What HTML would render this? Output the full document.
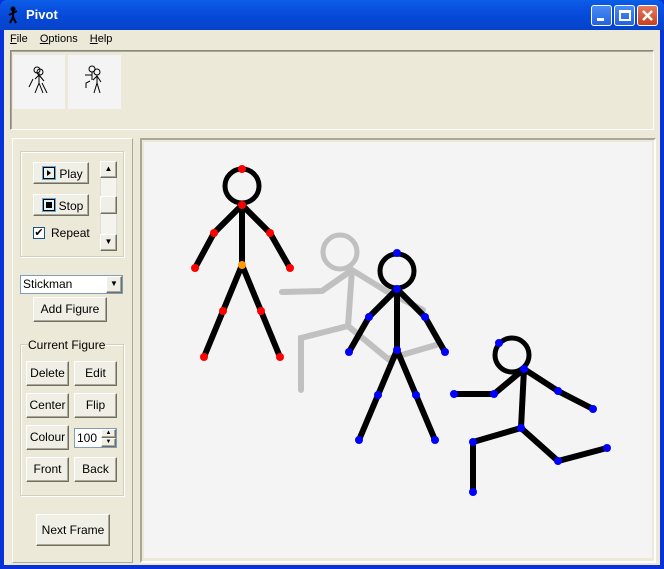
<!DOCTYPE html>
<html><head><style>
*{margin:0;padding:0;box-sizing:border-box}
body{width:664px;height:569px;overflow:hidden;background:#0831d9;font-family:Tahoma,"Liberation Sans",sans-serif;font-size:11px;color:#000;position:relative}
.title{position:absolute;left:0;top:0;width:664px;height:30px;background:linear-gradient(#0a5fe8,#0a54e2 20%,#0648d6 60%,#0544c8);border-radius:7px 7px 0 0}
.title span{position:absolute;left:26px;top:7px;color:#fff;font-weight:bold;font-size:13px;font-family:"Liberation Sans",sans-serif}
.btn{position:absolute;top:5px;width:21px;height:21px;border:1px solid #fff;border-radius:3px;background:linear-gradient(#4a8cf5,#2462df)}
.client{position:absolute;left:4px;top:30px;width:656px;height:535px;background:#ece9d8}
.menu{position:absolute;left:10px;top:33px;font-size:11px}
.menu span{margin-right:9px}
.b{position:absolute;background:#f0efe6;border:1px solid;border-color:#fff #716f64 #716f64 #fff;box-shadow:inset -1px -1px 0 #aca899;text-align:center;font-size:12px;line-height:22px}
.grp{position:absolute;border:1px solid #d0d0bf;box-shadow:1px 1px 0 #fff inset,1px 1px 0 #fff}
</style></head><body>
<div class="title">
<svg style="position:absolute;left:7px;top:6px" width="12" height="18"><circle cx="6" cy="3" r="2.5" fill="#000"/><path d="M6 5V11M6 7L2 9M6 7L10 5M6 11L3 17M6 11L9 17" stroke="#000" stroke-width="2" fill="none"/></svg>
<span>Pivot</span>
<div class="btn" style="left:591px"><div style="position:absolute;left:5px;top:12px;width:7px;height:3px;background:#fff"></div></div>
<div class="btn" style="left:614px"><div style="position:absolute;left:4px;top:4px;width:12px;height:11px;border:2px solid #fff;border-top-width:3px"></div></div>
<div class="btn" style="left:637px;background:linear-gradient(#e6795c,#c8401f)"><svg width="19" height="19"><path d="M5 5L14 14M14 5L5 14" stroke="#fff" stroke-width="2.5"/></svg></div>
</div>
<div class="client"></div>
<div class="menu"><span><u>F</u>ile</span> <span><u>O</u>ptions</span> <span><u>H</u>elp</span></div>
<div style="position:absolute;left:10px;top:50px;width:644px;height:80px;border:1px solid;border-color:#8a887c #fff #fff #8a887c;box-shadow:inset 1px 1px 0 #aca899"></div>
<div style="position:absolute;left:13px;top:55px;width:52px;height:54px;background:#f4f4f4"></div>
<div style="position:absolute;left:68px;top:55px;width:53px;height:54px;background:#f4f4f4"></div>
<svg style="position:absolute;left:13px;top:55px" width="110" height="54" stroke="#000" fill="none" stroke-width="1">
<circle cx="24" cy="15" r="3"/><circle cx="27" cy="17" r="3" /><path d="M26 18V28L22 38M26 28L30 38M26 20L22 24M26 20L31 26M20 24L16 32M29 28L34 38"/>
<g transform="translate(55,0)"><circle cx="24" cy="14" r="3"/><circle cx="29" cy="17" r="3"/><path d="M29 20V28L26 38M29 28L32 38M24 17V25M24 20L17 20M29 21L25 25M29 21L33 27M22 26L18 28V33"/></g>
</svg>
<div style="position:absolute;left:12px;top:138px;width:121px;height:425px;border:1px solid;border-color:#fff #aca899 #aca899 #fff"></div>
<div class="grp" style="left:20px;top:151px;width:104px;height:106px"></div>
<div class="b" style="left:33px;top:162px;width:56px;height:22px"><span style="position:absolute;left:9px;top:4px;width:12px;height:12px;border:1px solid #000;box-shadow:0 0 0 1px #5ad"></span><span style="position:absolute;left:13px;top:7px;border-left:4px solid #000;border-top:3px solid transparent;border-bottom:3px solid transparent"></span><span style="margin-left:20px">Play</span></div>
<div class="b" style="left:33px;top:194px;width:56px;height:22px"><span style="position:absolute;left:9px;top:4px;width:12px;height:12px;border:1px solid #000;box-shadow:0 0 0 1px #5ad"></span><span style="position:absolute;left:12px;top:7px;width:6px;height:6px;background:#000"></span><span style="margin-left:20px">Stop</span></div>
<div style="position:absolute;left:33px;top:227px;width:12px;height:12px;border:1px solid #1c5180;background:#fff;font-size:11px;line-height:10px;text-align:center">✔</div>
<div style="position:absolute;left:51px;top:226px;font-size:12px">Repeat</div>
<div style="position:absolute;left:100px;top:161px;width:17px;height:90px;background:#f4f3ee;border:1px solid #ddd"></div>
<div class="b" style="left:100px;top:161px;width:17px;height:17px;line-height:14px;font-size:8px">▲</div>
<div class="b" style="left:100px;top:196px;width:17px;height:18px"></div>
<div class="b" style="left:100px;top:234px;width:17px;height:17px;line-height:14px;font-size:8px">▼</div>
<div style="position:absolute;left:20px;top:275px;width:103px;height:19px;background:#fff;border:1px solid #7f9db9;font-size:12px;line-height:17px;padding-left:2px">Stickman</div>
<div class="b" style="left:106px;top:276px;width:16px;height:17px;line-height:14px;font-size:8px">▼</div>
<div class="b" style="left:33px;top:297px;width:74px;height:25px;line-height:23px">Add Figure</div>
<div class="grp" style="left:20px;top:344px;width:104px;height:152px"></div>
<div style="position:absolute;left:27px;top:338px;background:#ece9d8;font-size:12px;padding:0 1px">Current Figure</div>
<div class="b" style="left:26px;top:361px;width:43px;height:25px;line-height:23px">Delete</div>
<div class="b" style="left:74px;top:361px;width:43px;height:25px;line-height:23px">Edit</div>
<div class="b" style="left:26px;top:393px;width:43px;height:25px;line-height:23px">Center</div>
<div class="b" style="left:74px;top:393px;width:43px;height:25px;line-height:23px">Flip</div>
<div class="b" style="left:26px;top:425px;width:43px;height:25px;line-height:23px">Colour</div>
<div style="position:absolute;left:74px;top:428px;width:43px;height:20px;background:#fff;border:1px solid #7f9db9;font-size:12px;line-height:18px;padding-left:2px">100</div>
<div class="b" style="left:101px;top:429px;width:15px;height:9px;font-size:6px;line-height:7px">▲</div>
<div class="b" style="left:101px;top:438px;width:15px;height:9px;font-size:6px;line-height:7px">▼</div>
<div class="b" style="left:26px;top:457px;width:43px;height:25px;line-height:23px">Front</div>
<div class="b" style="left:74px;top:457px;width:43px;height:25px;line-height:23px">Back</div>
<div class="b" style="left:36px;top:514px;width:74px;height:32px;line-height:30px">Next Frame</div>
<div style="position:absolute;left:140px;top:138px;width:516px;height:425px;border:2px solid;border-color:#aca899 #fff #fff #aca899;background:#ece9d8"></div>
<div style="position:absolute;left:144px;top:142px;width:508px;height:416px;background:#f4f4f4"></div>
<svg style="position:absolute;left:0;top:0" width="664" height="569" fill="none" stroke-linecap="round" stroke-width="6">
<g stroke="#c0c0c0">
<circle cx="340" cy="252" r="17" stroke-width="5"/>
<path d="M352 270L348 326M352 270L322 291L282 292M352 270L386 291L423 310M348 326L301 338L301 390M348 326L388 359L436 345"/>
</g>
<g stroke="#000">
<circle cx="242" cy="186" r="17" stroke-width="5"/>
<path d="M242 205L242 265M242 205L214 233L195 268M242 205L270 233L290 268M242 265L223 311L204 357M242 265L261 311L280 357"/>
<circle cx="397" cy="271" r="17" stroke-width="5"/>
<path d="M397 289L397 350M397 289L369 317L349 352M397 289L425 317L445 352M397 350L378 395L359 440M397 350L416 395L435 440"/>
<circle cx="512" cy="355" r="17" stroke-width="5"/>
<path d="M524 369L521 428M524 369L494 394L454 394M524 369L558 391L593 409M521 428L473 442L473 492M521 428L558 461L607 448"/>
</g>
<g fill="#f00" stroke="none">
<circle cx="242" cy="169" r="4"/><circle cx="242" cy="205" r="4"/><circle cx="214" cy="233" r="4"/><circle cx="195" cy="268" r="4"/><circle cx="270" cy="233" r="4"/><circle cx="290" cy="268" r="4"/><circle cx="223" cy="311" r="4"/><circle cx="204" cy="357" r="4"/><circle cx="261" cy="311" r="4"/><circle cx="280" cy="357" r="4"/>
</g>
<circle cx="242" cy="265" r="4" fill="#f90"/>
<g fill="#00f" stroke="none">
<circle cx="397" cy="253" r="4"/><circle cx="397" cy="289" r="4"/><circle cx="369" cy="317" r="4"/><circle cx="349" cy="352" r="4"/><circle cx="425" cy="317" r="4"/><circle cx="445" cy="352" r="4"/><circle cx="397" cy="350" r="4"/><circle cx="378" cy="395" r="4"/><circle cx="359" cy="440" r="4"/><circle cx="416" cy="395" r="4"/><circle cx="435" cy="440" r="4"/>
<circle cx="499" cy="343" r="4"/><circle cx="524" cy="369" r="4"/><circle cx="494" cy="394" r="4"/><circle cx="454" cy="394" r="4"/><circle cx="558" cy="391" r="4"/><circle cx="593" cy="409" r="4"/><circle cx="521" cy="428" r="4"/><circle cx="473" cy="442" r="4"/><circle cx="473" cy="492" r="4"/><circle cx="558" cy="461" r="4"/><circle cx="607" cy="448" r="4"/>
</g>
</svg>
</body></html>
